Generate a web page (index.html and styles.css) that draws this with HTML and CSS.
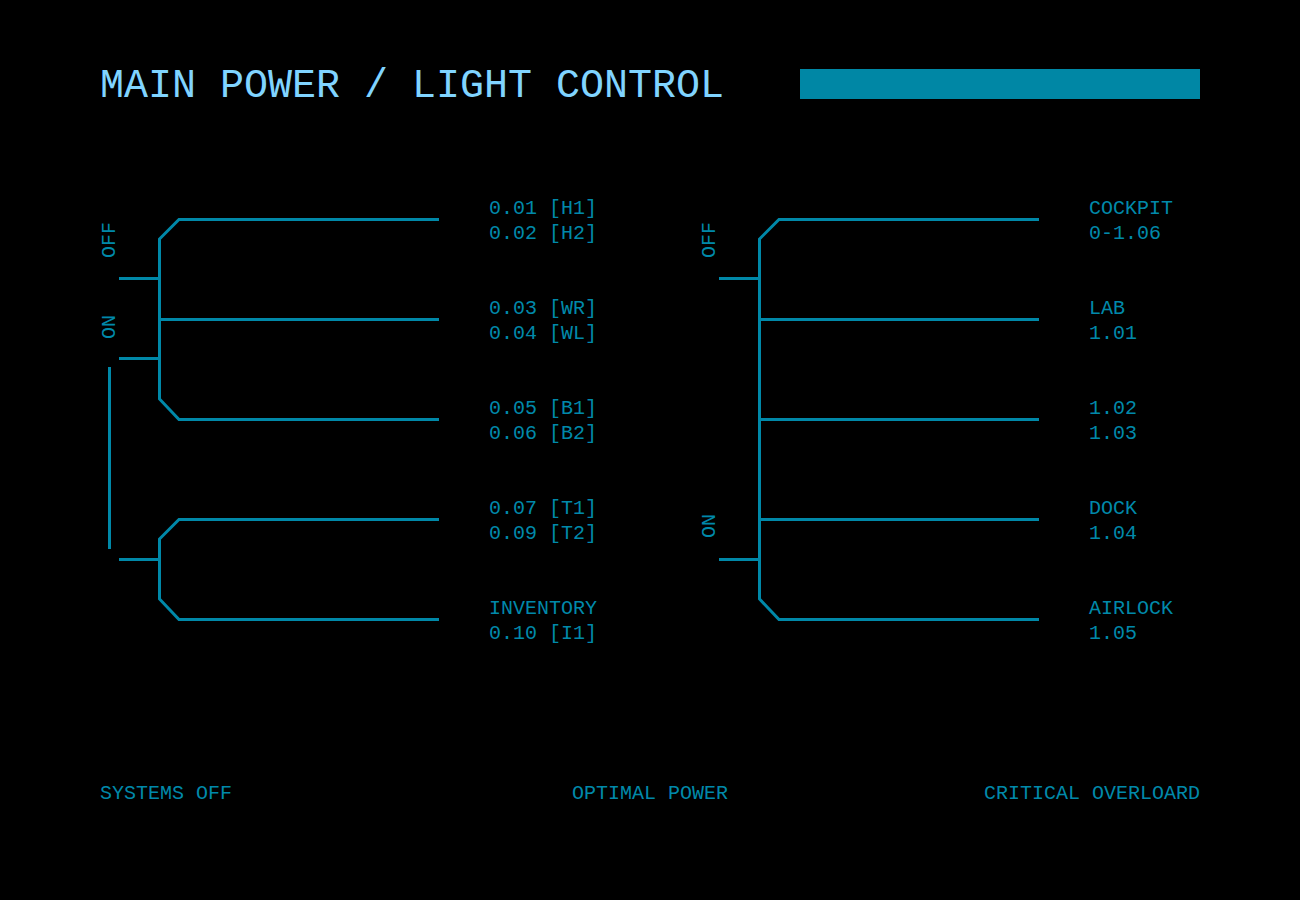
FILE: index.html
```html
<!DOCTYPE html>
<html lang="en">
<head>
<meta charset="utf-8">
<title>Main Power / Light Control</title>
<link rel="stylesheet" href="styles.css">
</head>
<body>
<main class="screen">
  <header class="header">
    <h1 class="title">MAIN POWER / LIGHT CONTROL</h1>
    <div class="bar"></div>
  </header>

  <section class="panels">
    <div class="panel">
      <svg class="diagram" width="340" height="500" viewBox="0 0 340 500">
        <g class="wire">
          <path d="M339 50.5 H79 L59.5 70 V230 L79 250.5 H339"/>
          <path d="M59.5 150.5 H339"/>
          <path d="M19 109.5 H59.5"/>
          <path d="M19 189.5 H59.5"/>
          <path d="M9.5 198 V380"/>
          <path d="M339 350.5 H79 L59.5 370 V430 L79 450.5 H339"/>
          <path d="M19 390.5 H59.5"/>
        </g>
        <text class="state" x="15" y="71" transform="rotate(-90 15 71)">OFF</text>
        <text class="state" x="15" y="158" transform="rotate(-90 15 158)">ON</text>
      </svg>
      <ul class="labels">
        <li><span>0.01 [H1]</span><span>0.02 [H2]</span></li>
        <li><span>0.03 [WR]</span><span>0.04 [WL]</span></li>
        <li><span>0.05 [B1]</span><span>0.06 [B2]</span></li>
        <li><span>0.07 [T1]</span><span>0.09 [T2]</span></li>
        <li><span>INVENTORY</span><span>0.10 [I1]</span></li>
      </ul>
    </div>

    <div class="panel">
      <svg class="diagram" width="340" height="500" viewBox="0 0 340 500">
        <g class="wire">
          <path d="M339 50.5 H79 L59.5 70 V430 L79 450.5 H339"/>
          <path d="M59.5 150.5 H339"/>
          <path d="M59.5 250.5 H339"/>
          <path d="M59.5 350.5 H339"/>
          <path d="M19 109.5 H59.5"/>
          <path d="M19 390.5 H59.5"/>
        </g>
        <text class="state" x="15" y="71" transform="rotate(-90 15 71)">OFF</text>
        <text class="state" x="15" y="357" transform="rotate(-90 15 357)">ON</text>
      </svg>
      <ul class="labels">
        <li><span>COCKPIT</span><span>0-1.06</span></li>
        <li><span>LAB</span><span>1.01</span></li>
        <li><span>1.02</span><span>1.03</span></li>
        <li><span>DOCK</span><span>1.04</span></li>
        <li><span>AIRLOCK</span><span>1.05</span></li>
      </ul>
    </div>
  </section>

  <footer class="legend">
    <span class="legend-left">SYSTEMS OFF</span>
    <span class="legend-mid">OPTIMAL POWER</span>
    <span class="legend-right">CRITICAL OVERLOARD</span>
  </footer>
</main>
</body>
</html>
```

FILE: styles.css
```css
* {
  box-sizing: border-box;
}

html, body {
  margin: 0;
  padding: 0;
  background: #000;
}

body {
  width: 1300px;
  height: 900px;
  overflow: hidden;
  font-family: "Liberation Mono", "DejaVu Sans Mono", monospace;
  color: #0089aa;
}

.screen {
  padding: 62px 100px 0 100px;
}

.header {
  display: flex;
  align-items: center;
  justify-content: space-between;
  height: 50px;
}

.title {
  margin: 0;
  font-size: 40px;
  font-weight: 400;
  line-height: 50px;
  color: #80d4ff;
  white-space: nowrap;
}

.bar {
  width: 400px;
  height: 30px;
  background: #0087a5;
  margin-top: -6px;
}

.panels {
  display: flex;
  margin-top: 57px;
}

.panel {
  display: flex;
  flex: none;
  width: 600px;
}

.diagram {
  display: block;
  flex: none;
  overflow: visible;
}

.wire path {
  fill: none;
  stroke: #0088a8;
  stroke-width: 3;
}

.state {
  fill: #0089aa;
  font-family: "Liberation Mono", "DejaVu Sans Mono", monospace;
  font-size: 20px;
  text-anchor: middle;
}

.labels {
  list-style: none;
  margin: 0 0 0 49px;
  padding: 2px 0 0 0;
  display: flex;
  flex-direction: column;
}

.labels li {
  height: 100px;
  display: flex;
  flex-direction: column;
  justify-content: center;
  font-size: 20px;
  line-height: 25px;
  white-space: nowrap;
}

.legend {
  display: grid;
  grid-template-columns: 1fr auto 1fr;
  margin-top: 111px;
  font-size: 20px;
  line-height: 24px;
}

.legend-left {
  justify-self: start;
}

.legend-mid {
  justify-self: center;
}

.legend-right {
  justify-self: end;
}
```
